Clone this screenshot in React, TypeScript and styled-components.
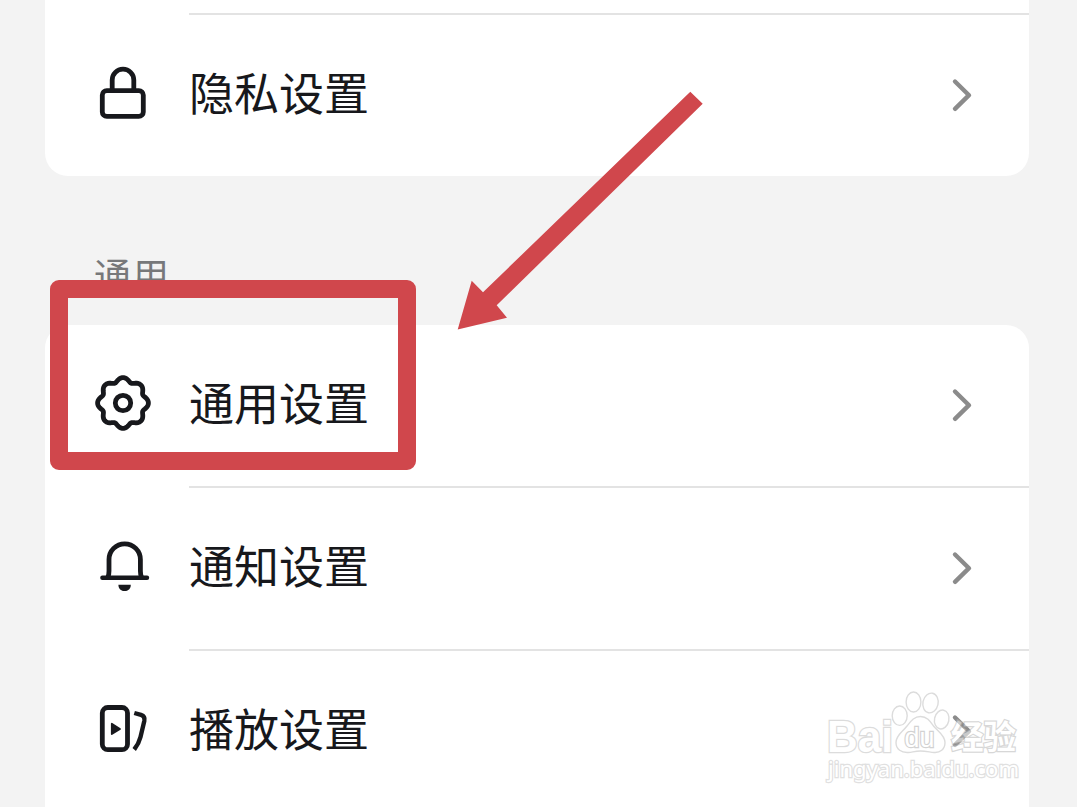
import styled, { createGlobalStyle } from "styled-components"

type IconName = "lock" | "gear" | "bell" | "play"

interface RowProps {
  icon: IconName
  label: string
  divider?: boolean
}

const INK = "#17181c"
const MARK = "#d0474c"

// scalloped outline of the gear, eight lobes around (28, 28)
const gearPath = () => {
  let d = ""
  for (let i = 0; i < 160; i++) {
    const a = (i / 160) * Math.PI * 2
    const r = 23.4 + 2 * Math.cos(8 * a)
    // widen the lobes by pulling the points towards the valleys
    const b = a + 0.025 * Math.sin(8 * a)
    d += `${i ? "L" : "M"}${(28 + r * Math.cos(b)).toFixed(2)} ${(28 + r * Math.sin(b)).toFixed(2)}`
  }
  return d + "Z"
}

const RowIcon = ({ name }: { name: IconName }) => {
  switch (name) {
    case "lock":
      return (
        <Glyph viewBox="0 0 56 56">
          <rect x="7.3" y="25.6" width="41" height="25.8" rx="4.5" />
          <path d="M17.2 25V15a10.8 10.8 0 0 1 21.6 0V25" />
        </Glyph>
      )
    case "gear":
      return (
        <Glyph viewBox="0 0 56 56">
          <path d={gearPath()} />
          <circle cx="28" cy="28" r="7.7" />
        </Glyph>
      )
    case "bell":
      return (
        <Glyph viewBox="0 0 56 56">
          <path d="M12.8 39.5Q14 37 14 33V21.5a15.7 15.7 0 0 1 31.4 0V33Q45.4 37 46.6 39.5" />
          <path d="M7.4 39.7H52" strokeWidth="4.4" />
          <path d="M23.4 46.7h12.4c0 4-2.6 6.3-6.200 6.300s-6.200-2.300-6.200-6.300Z" fill={INK} stroke="none" />
        </Glyph>
      )
    case "play":
      return (
        <Glyph viewBox="0 0 56 56">
          <rect x="7.3" y="6.5" width="25.2" height="42.2" rx="5.5" />
          <path d="M16.8 22.7v10.4L25 27.9Z" fill={INK} strokeWidth="1.8" />
          <path d="M39.3 12l6.700 1.900q4.300 1.400 3.300 6.100L45.500 36q-1.700 6.800-6.300 12.500" strokeWidth="4.4" strokeLinecap="butt" />
        </Glyph>
      )
  }
}

const SettingRow = ({ icon, label, divider }: RowProps) => (
  <Row>
    <RowIcon name={icon} />
    <RowBody $divider={divider}>
      <Label>{label}</Label>
      <Chevron viewBox="0 0 24 36">
        <path d="M5 4.5L19 18.2L5 31.8" />
      </Chevron>
    </RowBody>
  </Row>
)

const Watermark = () => (
  <WatermarkSvg viewBox="0 0 210 104">
    <g fill="#fff" stroke="#dcdcdc" strokeWidth="1.4" paintOrder="stroke">
      <text x="6" y="65.5" fontSize="45" strokeWidth="2.6" fontFamily="'Liberation Sans', sans-serif" fontWeight="700" textLength="66" lengthAdjust="spacingAndGlyphs">Bai</text>
      <text x="130" y="63" fontSize="32.5" strokeWidth="2.4" fontFamily="'Noto Sans CJK SC', sans-serif" fontWeight="700" opacity=".55" stroke="#b8b8b8">经验</text>
      <g fill="none">
        <ellipse cx="78.7" cy="29.7" rx="7.5" ry="9.7" />
        <ellipse cx="92.5" cy="16" rx="7.4" ry="10" />
        <ellipse cx="109.5" cy="17" rx="7.6" ry="10" transform="rotate(12 109.5 17)" />
        <ellipse cx="120.7" cy="33.5" rx="7.2" ry="9.5" transform="rotate(12 120.7 33.5)" />
        <path d="M99.5 30.5c6.5 0 9.5 4.5 13 9.5c4 5 11.5 9 11.5 16.500c0 7-5 10.500-11 10c-4-.3-8-1.500-13.500-1.500s-8 1.200-12 1.500c-7 .5-12.500-3-12.500-10c0-7.500 7-11 11-16.500c4-5 7-9.500 13.500-9.500Z" />
      </g>
      <text x="83.5" y="60.5" fontSize="27" strokeWidth="2.4" stroke="#d2d2d2" fontFamily="'Liberation Sans', sans-serif" textLength="30" lengthAdjust="spacingAndGlyphs">du</text>
      <text x="7" y="90.5" fontSize="22" strokeWidth="2.4" stroke="#e0e0e0" fontFamily="'Noto Sans', sans-serif" textLength="191" lengthAdjust="spacingAndGlyphs">jingyan.baidu.com</text>
    </g>
  </WatermarkSvg>
)

export default function App() {
  return (
    <Page>
      <GlobalStyle />
      <Card $place="top">
        <TopDivider />
        <SettingRow icon="lock" label="隐私设置" />
      </Card>
      <SectionTitle>通用</SectionTitle>
      <Card $place="bottom">
        <SettingRow icon="gear" label="通用设置" divider />
        <SettingRow icon="bell" label="通知设置" divider />
        <SettingRow icon="play" label="播放设置" />
      </Card>
      <Highlight />
      <Arrow viewBox="0 0 250 242">
        <path d="M235.3 1.7L247.7 13.7L41.7 215.3L52 227.7L2.7 239.5L16.7 190.7L28 202.3Z" />
      </Arrow>
      <Watermark />
    </Page>
  )
}

const GlobalStyle = createGlobalStyle`
  body {
    margin: 0;
    overflow: hidden;
  }
`

const Page = styled.div`
  position: relative;
  box-sizing: border-box;
  width: 1077px;
  height: 807px;
  padding: 0 48px 0 45px;
  overflow: hidden;
  background: #f3f3f3;
  color: ${INK};
  font-family: 'Noto Sans CJK SC', sans-serif;
`

const Card = styled.div<{ $place: "top" | "bottom" }>`
  box-sizing: border-box;
  height: ${({ $place }) => ($place === "top" ? "176px" : "482px")};
  padding-top: ${({ $place }) => ($place === "top" ? "13px" : "0")};
  border-radius: ${({ $place }) => ($place === "top" ? "0 0 23px 23px" : "23px 23px 0 0")};
  background: #fff;
`

const TopDivider = styled.div`
  height: 2px;
  margin-left: 144px;
  background: #e3e3e3;
`

const Row = styled.div`
  display: flex;
  align-items: center;
  height: 163px;
  padding-left: 50px;
`

const RowBody = styled.div<{ $divider?: boolean }>`
  display: flex;
  flex: 1;
  align-items: center;
  justify-content: space-between;
  box-sizing: border-box;
  height: 100%;
  margin-left: 38px;
  padding-right: 55px;
  border-bottom: 2px solid ${({ $divider }) => ($divider ? "#e3e3e3" : "transparent")};
`

const Label = styled.span`
  margin-bottom: 7px;
  font-size: 45px;
  line-height: 60px;
`

const Glyph = styled.svg`
  flex: none;
  width: 56px;
  height: 56px;
  margin-bottom: 7px;
  fill: none;
  stroke: ${INK};
  stroke-width: 4.8;
  stroke-linecap: round;
  stroke-linejoin: round;
`

const Chevron = styled.svg`
  width: 24px;
  height: 36px;
  margin-bottom: 2px;
  fill: none;
  stroke: #8b8b8b;
  stroke-width: 4.4;
  stroke-linecap: round;
  stroke-linejoin: round;
`

const SectionTitle = styled.div`
  box-sizing: border-box;
  height: 149px;
  padding: 73px 0 0 49px;
  color: #77787a;
  font-size: 37px;
  line-height: 50px;
  letter-spacing: 1px;
`

/* annotations lying over the list */
const Highlight = styled.div`
  position: absolute;
  top: 280px;
  left: 50px;
  box-sizing: border-box;
  width: 366px;
  height: 190px;
  border: 18px solid ${MARK};
  border-radius: 9px;
`

const Arrow = styled.svg`
  position: absolute;
  top: 90px;
  left: 455px;
  width: 250px;
  height: 242px;
  fill: ${MARK};
`

const WatermarkSvg = styled.svg`
  position: absolute;
  top: 686px;
  left: 821px;
  width: 210px;
  height: 104px;
`
